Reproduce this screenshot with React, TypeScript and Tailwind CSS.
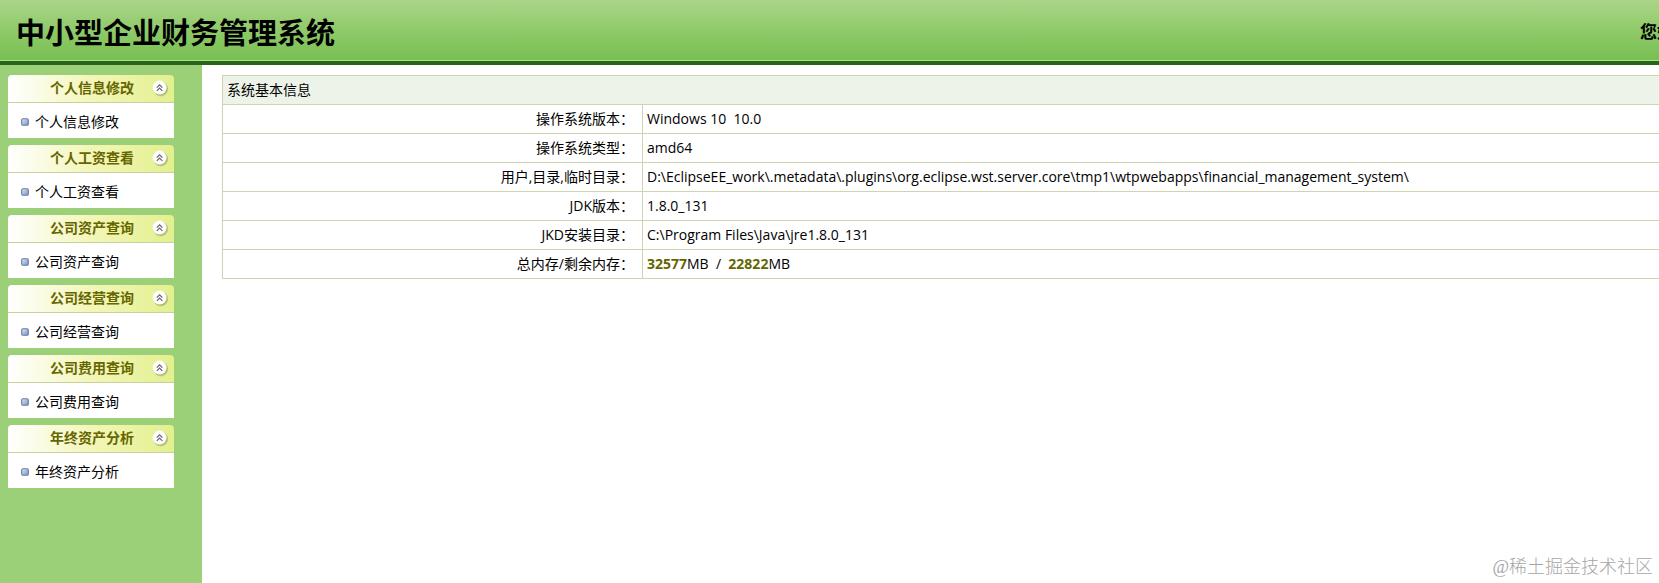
import React from "react";

const menu = [
  "个人信息修改",
  "个人工资查看",
  "公司资产查询",
  "公司经营查询",
  "公司费用查询",
  "年终资产分析",
];

const rows: { label: string; value: React.ReactNode }[] = [
  { label: "操作系统版本：", value: "Windows 10\u00a0 10.0" },
  { label: "操作系统类型：", value: "amd64" },
  {
    label: "用户,目录,临时目录：",
    value:
      "D:\\EclipseEE_work\\.metadata\\.plugins\\org.eclipse.wst.server.core\\tmp1\\wtpwebapps\\financial_management_system\\",
  },
  { label: "JDK版本：", value: "1.8.0_131" },
  { label: "JKD安装目录：", value: "C:\\Program Files\\Java\\jre1.8.0_131" },
  {
    label: "总内存/剩余内存：",
    value: (
      <>
        <b className="text-[#666600]">32577</b>MB&nbsp; /&nbsp; <b className="text-[#666600]">22822</b>MB
      </>
    ),
  },
];

function CollapseIcon() {
  return (
    <svg viewBox="0 0 18 18" className="size-[18px]" aria-hidden="true">
      <circle cx="9.8" cy="10" r="7.4" fill="#8f9a62" opacity="0.35" />
      <circle cx="9.4" cy="9.5" r="7.2" fill="#8f9a62" opacity="0.45" />
      <circle cx="8.6" cy="8.6" r="7" fill="#fdfdfd" />
      <path d="M5.8 8.6 8.6 5.8l2.8 2.8M5.8 11.8 8.6 9l2.8 2.8" fill="none" stroke="#666" strokeWidth="1.2" />
    </svg>
  );
}

function Bullet() {
  return (
    <svg viewBox="0 0 8 8" className="size-2" aria-hidden="true">
      <defs>
        <linearGradient id="bullet" x1="0" y1="0" x2="1" y2="1">
          <stop offset="0" stopColor="#dce9fa" />
          <stop offset="1" stopColor="#6f93cc" />
        </linearGradient>
      </defs>
      <rect x="0.7" y="0.7" width="6.6" height="6.6" rx="1.4" fill="url(#bullet)" stroke="#6d7a92" strokeWidth="1.1" />
    </svg>
  );
}

function Panel({ title }: { title: string }) {
  return (
    <section>
      <button
        type="button"
        className="flex h-7 w-full items-center justify-between rounded-t border-b border-[#c9cf9f] bg-linear-to-r from-white via-[#f3f6b8] to-[#e3f08e] pr-[5px] pb-px pl-[42px] font-bold text-[#666600]"
      >
        <span>{title}</span>
        <CollapseIcon />
      </button>
      <a href="#" className="flex h-[35px] items-center gap-[6px] bg-white pt-[3px] pl-[13px] text-black">
        <Bullet />
        {title}
      </a>
    </section>
  );
}

export default function App() {
  return (
    <div className="relative flex min-h-screen flex-col overflow-hidden bg-white font-['Open_Sans','Noto_Sans_CJK_SC',sans-serif] text-[14px] leading-5 text-black">
      <header className="flex h-[65px] items-center justify-between border-b-4 border-[#28641a] bg-linear-to-b from-[#abd588] via-[#8fca69] to-[#78bf51] pl-4 shadow-[inset_0_-1px_0_#a9df88]">
        <h1 className="pt-1 text-[29px] leading-10 font-bold">中小型企业财务管理系统</h1>
        <span className="-mr-[15px] pt-[2px] text-[17px] leading-6 font-bold whitespace-nowrap">您好</span>
      </header>
      <div className="flex flex-1">
        <nav className="w-[202px] shrink-0 bg-[#9bcf78] pt-[10px] pr-7 pl-2">
          <div className="flex flex-col gap-[7px]">
            {menu.map((m) => (
              <Panel key={m} title={m} />
            ))}
          </div>
        </nav>
        <main className="min-w-0 flex-1 pt-[10px] pl-5">
          <table className="w-full border-collapse border border-r-0 border-[#d0d3b0]">
            <thead>
              <tr className="h-[29px] bg-[#edf3e8]">
                <th colSpan={2} className="px-1 text-left font-normal">
                  系统基本信息
                </th>
              </tr>
            </thead>
            <tbody>
              {rows.map((r) => (
                <tr key={r.label} className="h-[29px] border-t border-[#d0d3b0]">
                  <th scope="row" className="w-[420px] border-r border-[#d0d3b0] pr-2 pl-1 text-right font-normal">
                    {r.label}
                  </th>
                  <td className="px-1">{r.value}</td>
                </tr>
              ))}
            </tbody>
          </table>
        </main>
      </div>
      <div className="absolute right-[6px] bottom-1 font-['Liberation_Serif','Noto_Sans_CJK_SC',serif] text-[18px] leading-6 font-light text-[#a6a6a6]">
        @稀土掘金技术社区
      </div>
    </div>
  );
}
